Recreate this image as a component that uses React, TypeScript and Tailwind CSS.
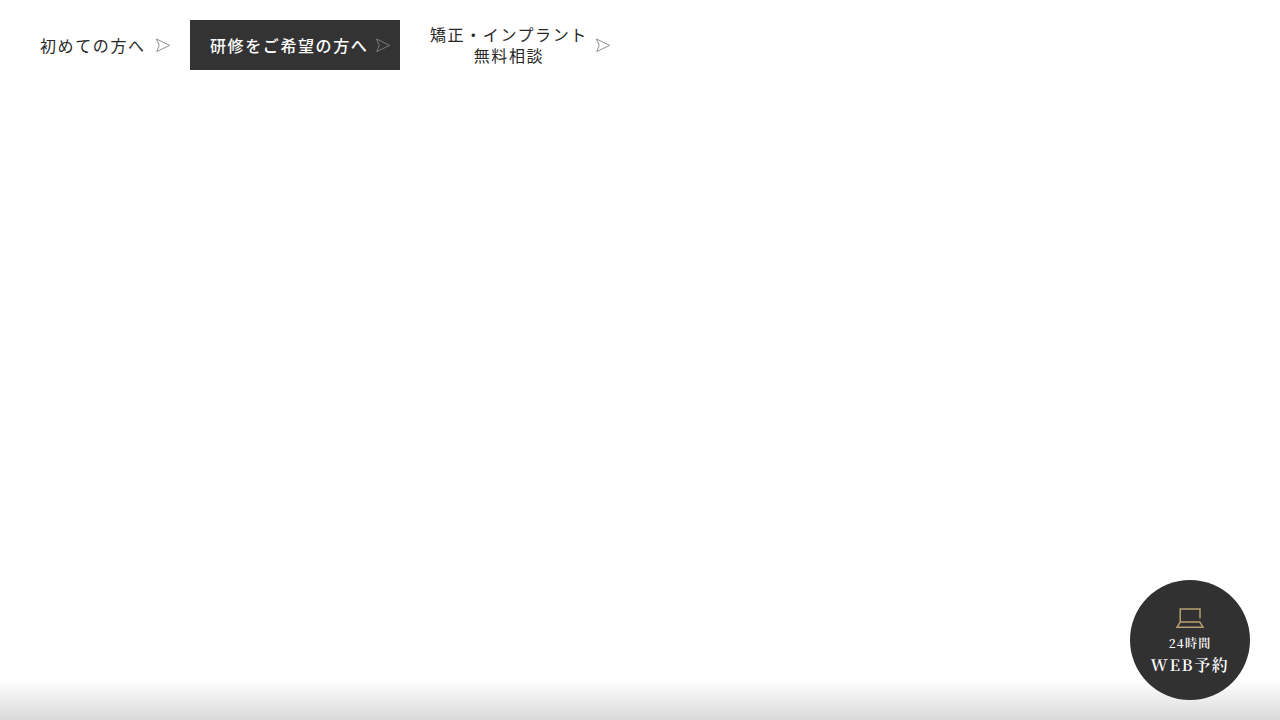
import type { ReactNode } from "react";

function Arrow() {
  return (
    <svg
      className="h-4 w-3.5 shrink-0"
      viewBox="1 0 14 16"
      fill="none"
      stroke="#858585"
      strokeWidth="0.9"
      aria-hidden="true"
    >
      <path d="M1.5 2 L14.6 8.4 L1.7 14.6 L4.2 8.4 Z" />
    </svg>
  );
}

function NavLink({ className, children }: { className: string; children: ReactNode }) {
  return (
    <a
      href="#"
      className={`flex h-[50px] items-center justify-between pl-5 pr-2.5 text-center text-base leading-[21px] tracking-widest ${className}`}
    >
      <span className="whitespace-nowrap">{children}</span>
      <Arrow />
    </a>
  );
}

function Laptop() {
  return (
    <svg
      className="h-5 w-7"
      viewBox="0 0 28 20"
      fill="none"
      stroke="#b8a070"
      strokeWidth="1.5"
      aria-hidden="true"
    >
      <path d="M24 10.5 V0.9 H4.2 V14 M4.2 14 H23.8 L27 19.2 H1.1 Z" />
    </svg>
  );
}

export default function App() {
  return (
    <div className="relative flex min-h-screen flex-col bg-white font-['Noto_Sans_CJK_JP',sans-serif] text-[#282828]">
      <nav className="flex flex-wrap gap-2.5 p-5">
        <NavLink className="w-40">初めての方へ</NavLink>
        <NavLink className="w-[210px] bg-[#333] font-medium text-white">研修をご希望の方へ</NavLink>
        <NavLink className="w-[210px]">
          矯正・インプラント
          <br />
          無料相談
        </NavLink>
      </nav>
      <div className="mt-auto h-10 bg-linear-to-b from-white to-[#dadada]" />
      <a
        href="#"
        className="fixed bottom-5 right-[30px] flex size-[120px] flex-col items-center rounded-full bg-[#313131] pt-7 font-['Noto_Serif_CJK_JP','Noto_Sans_CJK_JP',serif] font-semibold text-white"
      >
        <Laptop />
        <span className="mt-[7px] text-xs leading-4 tracking-widest">24時間</span>
        <span className="mt-1 text-base leading-5 tracking-widest">WEB予約</span>
      </a>
    </div>
  );
}
